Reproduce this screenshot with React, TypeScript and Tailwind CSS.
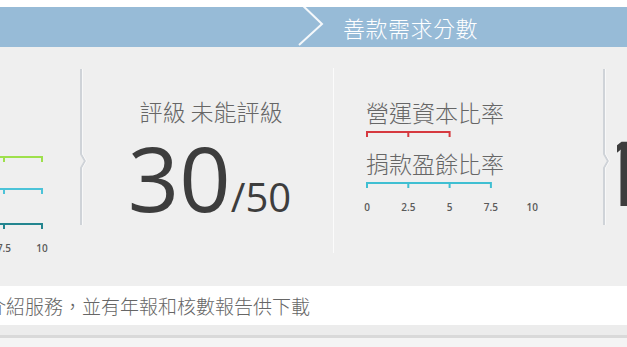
import React from "react";

const cjk = { fontFamily: '"Noto Sans CJK TC", "Noto Sans", sans-serif' };
const num = { fontFamily: '"Open Sans", "Noto Sans", sans-serif' };

function Separator() {
  return (
    <div className="w-[10px] shrink-0 pt-[21px]">
      <svg width="10" height="158" viewBox="0 0 10 158">
        <path
          d="M2 1 V86 L6 93 L2 100 V157"
          fill="none"
          stroke="#cfd3d8"
          strokeWidth="2"
        />
        <path
          d="M3.5 1 V86 L7.5 93 L3.5 100 V157"
          fill="none"
          stroke="#f8f8f8"
          strokeWidth="1"
        />
      </svg>
    </div>
  );
}

function Bar({ x1, x2, ticks, color, y }: { x1: number; x2: number; ticks: number[]; color: string; y: number }) {
  return (
    <g stroke={color} strokeWidth="2" fill="none">
      <line x1={x1} y1={y} x2={x2} y2={y} />
      {ticks.map((t) => (
        <line key={t} x1={t} y1={y - 1} x2={t} y2={y + 5} />
      ))}
    </g>
  );
}

export default function App() {
  const step = 41.3;
  const rx = (v: number) => 6 + (v / 2.5) * step;
  return (
    <div className="w-[627px] h-[347px] overflow-hidden bg-white flex flex-col">
      <div className="h-[7px] shrink-0 bg-white" />
      {/* header */}
      <div className="h-[40px] shrink-0 bg-[#97bbd7] flex items-center relative">
        <div className="w-[297px] shrink-0" />
        <svg width="30" height="48" viewBox="0 0 30 48" className="shrink-0 -mt-[8px]">
          <path d="M1 2 L25 25 L2 46" fill="none" stroke="#ffffff" strokeWidth="2" opacity="0.9" />
        </svg>
        <div className="pl-[16px] text-[22px] leading-none text-white font-light tracking-[0.5px]" style={cjk}>
          善款需求分數
        </div>
      </div>
      {/* main panel */}
      <div className="h-[239px] shrink-0 bg-[#efefef] flex">
        {/* left chart (cut off) */}
        <div className="w-[79px] shrink-0 overflow-hidden">
          <svg width="79" height="239" viewBox="0 0 79 239">
            <Bar x1={-5} x2={42} ticks={[4, 42]} color="#9ee04c" y={110} />
            <Bar x1={-5} x2={42} ticks={[4, 42]} color="#4cc3d8" y={142} />
            <Bar x1={-5} x2={42} ticks={[4, 42]} color="#23858f" y={177} />
            <g fill="#5a5a5a" fontSize="10" fontWeight="600" style={num} textAnchor="middle">
              <text x="4" y="205">7.5</text>
              <text x="42" y="205">10</text>
            </g>
          </svg>
        </div>
        <Separator />
        {/* middle score */}
        <div className="w-[244px] shrink-0 flex flex-col items-center pt-[49px]">
          <div className="text-[23px] leading-[30px] text-[#666] font-light" style={cjk}>
            評級&nbsp;未能評級
          </div>
          <div className="flex items-baseline mt-[6px] -ml-[3px] text-[#3d3d3d]" style={num}>
            <span className="text-[90px] leading-none">30</span>
            <span className="text-[40px] leading-none">/50</span>
          </div>
        </div>
        {/* divider */}
        <div className="w-[1px] shrink-0 pt-[21px] pb-[33px]">
          <div className="h-full bg-[#fbfbfb]" />
        </div>
        {/* right chart */}
        <div className="w-[268px] shrink-0 pl-[32px] pt-[51px] flex flex-col">
          <div className="text-[23px] leading-[28px] text-[#666] font-light" style={cjk}>
            營運資本比率
          </div>
          <svg width="190" height="10" viewBox="0 0 190 10" className="mt-[4px] -ml-[5px]">
            <Bar x1={rx(0)} x2={rx(5)} ticks={[rx(0), rx(2.5), rx(5)]} color="#d6393f" y={2} />
          </svg>
          <div className="text-[23px] leading-[28px] text-[#666] font-light mt-[9px]" style={cjk}>
            捐款盈餘比率
          </div>
          <svg width="190" height="40" viewBox="0 0 190 40" className="mt-[4px] -ml-[5px]">
            <Bar x1={rx(0)} x2={rx(7.5)} ticks={[rx(0), rx(2.5), rx(5), rx(7.5)]} color="#3fbfd2" y={2} />
            <g fill="#5a5a5a" fontSize="10" fontWeight="600" style={num} textAnchor="middle">
              <text x={rx(0)} y="30">0</text>
              <text x={rx(2.5)} y="30">2.5</text>
              <text x={rx(5)} y="30">5</text>
              <text x={rx(7.5)} y="30">7.5</text>
              <text x={rx(10)} y="30">10</text>
            </g>
          </svg>
        </div>
        <Separator />
        <div className="flex-1 flex pl-[5px] pt-[79px]">
          <div className="w-[20px] overflow-hidden">
            <span
              className="block -ml-[21px] text-[90px] leading-none text-[#3d3d3d] whitespace-nowrap"
              style={num}
            >
              1
            </span>
          </div>
        </div>
      </div>
      {/* description strip */}
      <div className="h-[39px] shrink-0 bg-white overflow-hidden flex items-center">
        <div className="-ml-[13px] whitespace-nowrap text-[19px] leading-none text-[#666] font-light" style={cjk}>
          介紹服務，並有年報和核數報告供下載
        </div>
      </div>
      <div className="h-[10px] shrink-0 bg-[#ececec]" />
      <div className="h-[3px] shrink-0 bg-[#d9d9d9]" />
      <div className="flex-1 bg-[#f4f4f4]" />
    </div>
  );
}
